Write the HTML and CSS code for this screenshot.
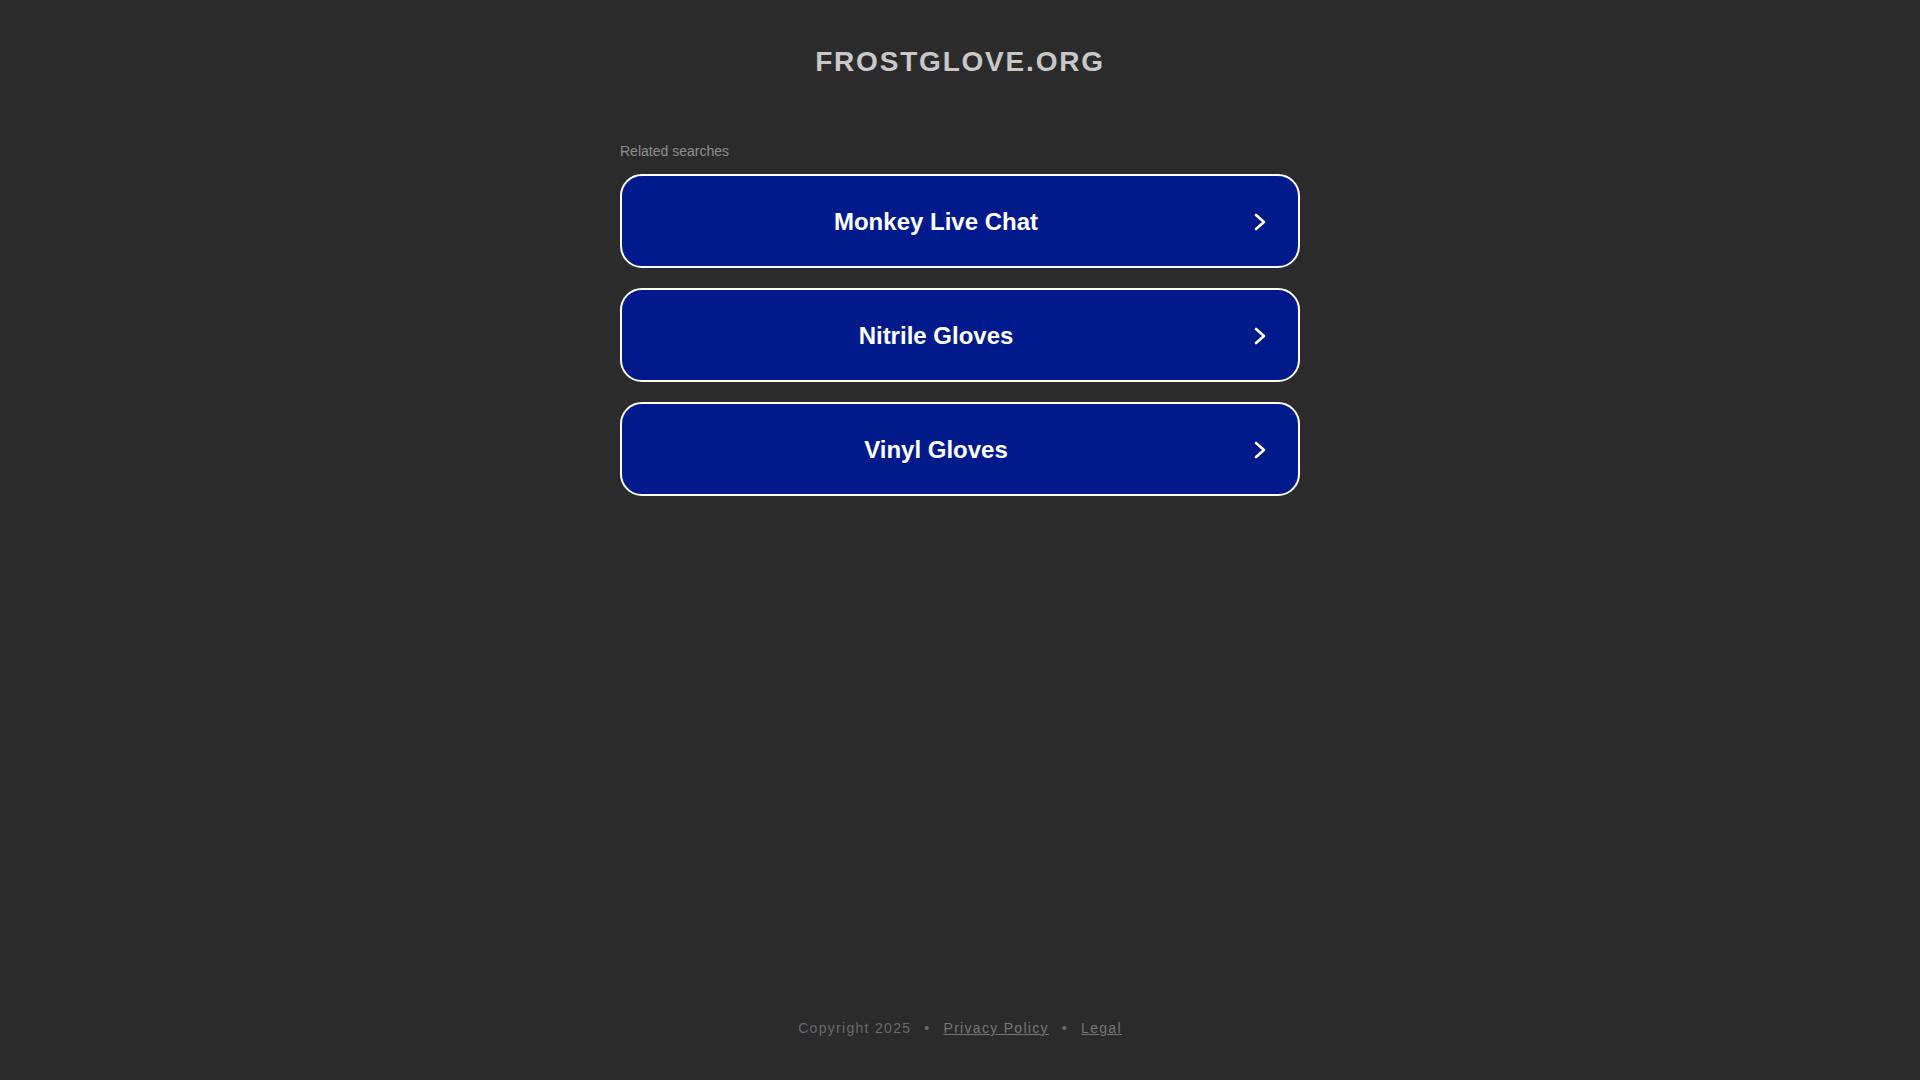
FILE: index.html
```html
<!DOCTYPE html>
<html lang="en">
<head>
<meta charset="utf-8">
<title>frostglove.org</title>
<link rel="stylesheet" href="styles.css">
</head>
<body>
<div class="page">
  <header class="header">
    <h1 class="domain">frostglove.org</h1>
  </header>
  <main class="main">
    <div class="related">Related searches</div>
    <ul class="links">
      <li><a class="link" href="#"><span class="link-text">Monkey Live Chat</span><svg class="chev" viewBox="0 0 12 18" width="12" height="18"><path d="M2 2 L10 9 L2 16" fill="none" stroke="#fff" stroke-width="2.6" stroke-linecap="round" stroke-linejoin="round"/></svg></a></li>
      <li><a class="link" href="#"><span class="link-text">Nitrile Gloves</span><svg class="chev" viewBox="0 0 12 18" width="12" height="18"><path d="M2 2 L10 9 L2 16" fill="none" stroke="#fff" stroke-width="2.6" stroke-linecap="round" stroke-linejoin="round"/></svg></a></li>
      <li><a class="link" href="#"><span class="link-text">Vinyl Gloves</span><svg class="chev" viewBox="0 0 12 18" width="12" height="18"><path d="M2 2 L10 9 L2 16" fill="none" stroke="#fff" stroke-width="2.6" stroke-linecap="round" stroke-linejoin="round"/></svg></a></li>
    </ul>
  </main>
  <footer class="footer">
    <span>Copyright 2025</span><span class="sep">•</span><a href="#">Privacy Policy</a><span class="sep">•</span><a href="#">Legal</a>
  </footer>
</div>
</body>
</html>
```

FILE: styles.css
```css
html, body {
  margin: 0;
  padding: 0;
  background: #2b2b2b;
  font-family: "Liberation Sans", Arial, sans-serif;
}

.page {
  min-height: 100vh;
  display: flex;
  flex-direction: column;
  align-items: center;
}

.header {
  margin-top: 46px;
}

.domain {
  margin: 0;
  font-size: 28px;
  line-height: 32px;
  font-weight: bold;
  text-transform: uppercase;
  letter-spacing: 1.8px;
  color: #c8c8c8;
  text-align: center;
}

.main {
  width: 680px;
  margin-top: 65px;
}

.related {
  font-size: 14px;
  line-height: 16px;
  color: #8f8f8f;
}

.links {
  list-style: none;
  margin: 15px 0 0;
  padding: 0;
  display: flex;
  flex-direction: column;
  gap: 20px;
}

.link {
  box-sizing: border-box;
  height: 94px;
  display: flex;
  align-items: center;
  padding-right: 32px;
  padding-top: 2px;
  background: #011a8b;
  border: 2px solid #ffffff;
  border-radius: 22px;
  text-decoration: none;
  color: #ffffff;
}

.link-text {
  flex: 1;
  text-align: center;
  font-size: 24px;
  font-weight: bold;
  line-height: 28px;
}

.chev {
  margin-left: 4px;
  display: block;
}

.footer {
  margin-top: auto;
  padding-bottom: 44px;
  font-size: 14px;
  line-height: 16px;
  letter-spacing: 1.3px;
  color: #6a6a6a;
  display: flex;
}

.footer a {
  color: #777777;
  text-decoration: underline;
}

.sep {
  margin: 0 13px;
}
```
